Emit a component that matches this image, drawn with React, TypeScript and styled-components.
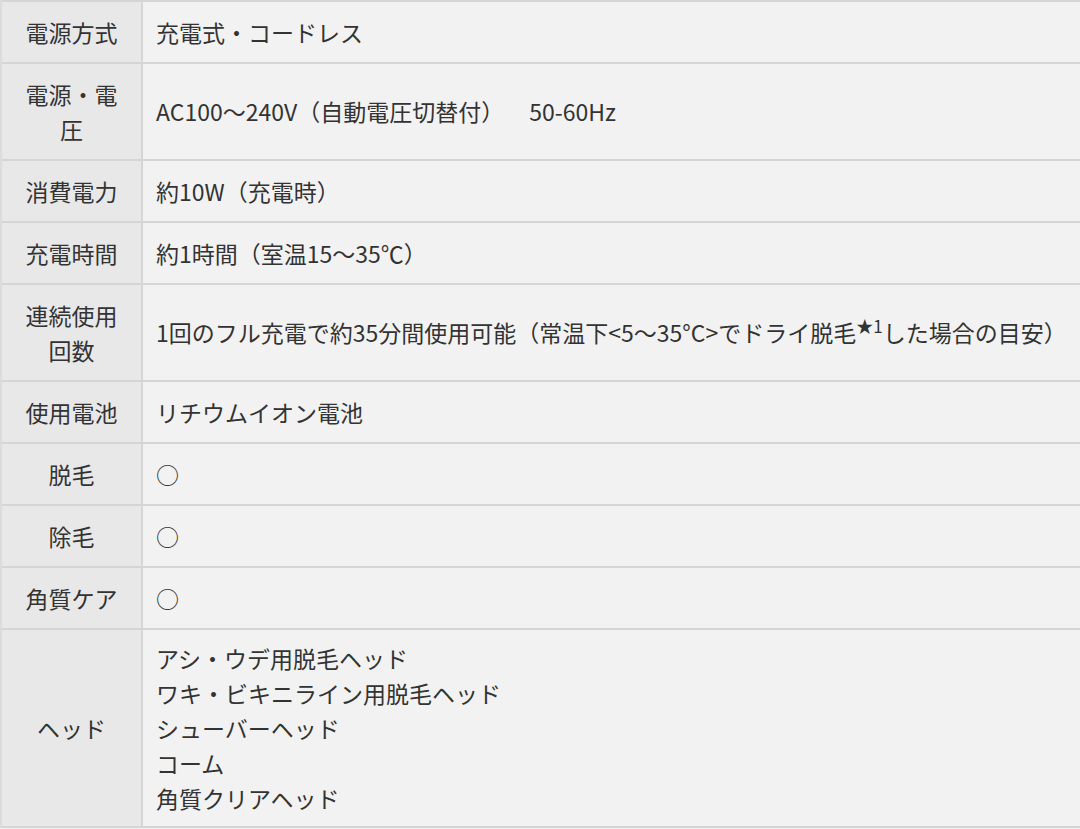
import React from "react";
import styled, { createGlobalStyle } from "styled-components";

const GlobalStyle = createGlobalStyle`
  html, body {
    margin: 0;
    padding: 0;
    background: #f2f2f2;
  }
  body {
    font-family: "Noto Sans CJK JP", "Noto Sans", sans-serif;
    color: #333;
  }
`;

const SpecTable = styled.table`
  width: calc(100% + 2px);
  border-collapse: collapse;
  font-size: 23px;
  line-height: 35px;
`;

const Row = styled.tr`
  border-top: 2px solid #d5d5d5;
  border-bottom: 2px solid #d5d5d5;
`;

const Label = styled.th<{ $tight?: boolean }>`
  width: 135px;
  padding: ${(p) => (p.$tight ? "10.5px 2px" : "12.5px 2px")};
  background: #e8e8e8;
  border-left: 2px solid #dcdcdc;
  border-right: 2px solid #d5d5d5;
  font-weight: 400;
  text-align: center;
  vertical-align: middle;
`;

const Value = styled.td<{ $tight?: boolean }>`
  padding: ${(p) => (p.$tight ? "10.5px 13px" : "12.5px 13px")};
  background: #f2f2f2;
  text-align: left;
  vertical-align: middle;
  white-space: nowrap;
`;

const Star = styled.sup`
  font-size: 17px;
  line-height: 0;
  vertical-align: 9px;
  letter-spacing: 0;
`;

const Gap = styled.span`
  margin-left: 25px;
`;

const Line = styled.div``;

type Spec = { label: React.ReactNode; value: React.ReactNode; tight?: boolean };

const specs: Spec[] = [
  { label: "電源方式", value: "充電式・コードレス" },
  {
    label: (
      <>
        電源・電
        <br />圧
      </>
    ),
    value: (
      <>
        AC100〜240V（自動電圧切替付）<Gap>50-60Hz</Gap>
      </>
    ),
  },
  { label: "消費電力", value: "約10W（充電時）" },
  { label: "充電時間", value: "約1時間（室温15〜35℃）" },
  {
    label: (
      <>
        連続使用
        <br />
        回数
      </>
    ),
    value: (
      <>
        1回のフル充電で約35分間使用可能（常温下&lt;5〜35°C&gt;でドライ脱毛
        <Star>★1</Star>した場合の目安）
      </>
    ),
  },
  { label: "使用電池", value: "リチウムイオン電池" },
  { label: "脱毛", value: "○" },
  { label: "除毛", value: "○" },
  { label: "角質ケア", value: "○" },
  {
    label: "ヘッド",
    tight: true,
    value: (
      <>
        <Line>アシ・ウデ用脱毛ヘッド</Line>
        <Line>ワキ・ビキニライン用脱毛ヘッド</Line>
        <Line>シューバーヘッド</Line>
        <Line>コーム</Line>
        <Line>角質クリアヘッド</Line>
      </>
    ),
  },
];

export default function App() {
  return (
    <>
      <GlobalStyle />
      <SpecTable>
        <tbody>
          {specs.map((s, i) => (
            <Row key={i}>
              <Label $tight={s.tight}>{s.label}</Label>
              <Value $tight={s.tight}>{s.value}</Value>
            </Row>
          ))}
        </tbody>
      </SpecTable>
    </>
  );
}
